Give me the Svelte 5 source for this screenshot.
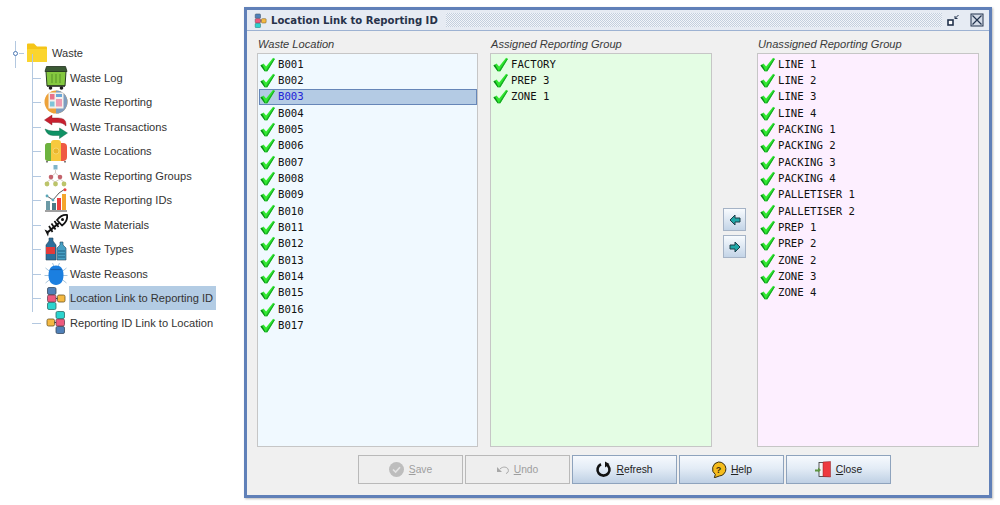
<script>
  const tree = [
    { label: "Waste Log", icon: "bin" },
    { label: "Waste Reporting", icon: "report" },
    { label: "Waste Transactions", icon: "swap" },
    { label: "Waste Locations", icon: "bag" },
    { label: "Waste Reporting Groups", icon: "groups" },
    { label: "Waste Reporting IDs", icon: "chart" },
    { label: "Waste Materials", icon: "fish" },
    { label: "Waste Types", icon: "bottle" },
    { label: "Waste Reasons", icon: "bug" },
    { label: "Location Link to Reporting ID", icon: "link", selected: true },
    { label: "Reporting ID Link to Location", icon: "link2" },
  ];

  const locations = [];
  for (let i = 1; i <= 17; i++) {
    locations.push("B" + String(i).padStart(3, "0"));
  }

  const assigned = ["FACTORY", "PREP 3", "ZONE 1"];

  const unassigned = [
    "LINE 1", "LINE 2", "LINE 3", "LINE 4",
    "PACKING 1", "PACKING 2", "PACKING 3", "PACKING 4",
    "PALLETISER 1", "PALLETISER 2",
    "PREP 1", "PREP 2",
    "ZONE 2", "ZONE 3", "ZONE 4",
  ];
</script>

{#snippet check()}
  <svg class="check" width="16" height="16" viewBox="0 0 16 16">
    <path d="M0.500 9 L3.800 6.800 L6.500 10 L14 0.800 L15.800 2 L7.800 15.200 L5 15.200 Z" fill="#2fe82f" />
    <path d="M0.500 9 L2.200 7.900 L6 15.200 L5 15.200 Z" fill="#0e8a1e" />
    <path d="M6 15.200 L7.800 15.200 L15.800 2 L15 1.500 L7 13.500 Z" fill="#17a825" />
  </svg>
{/snippet}

{#snippet linkIcon()}
  <rect x="3.500" y="1.500" width="8.500" height="7" rx="1.500" fill="#4f80b8" stroke="#3a4a5e" stroke-width="0.800" />
  <rect x="3.500" y="9" width="8.500" height="7" rx="1.500" fill="#ee5a7e" stroke="#6a4050" stroke-width="0.800" />
  <rect x="3.500" y="16.500" width="8.500" height="7" rx="1.500" fill="#2bd4cf" stroke="#2f6d6b" stroke-width="0.800" />
  <rect x="13.500" y="9" width="7.500" height="7" rx="1.500" fill="#f5b942" stroke="#6b5523" stroke-width="0.800" />
  <path d="M12 12.500h1.500" stroke="#444" stroke-width="1" />
{/snippet}

{#snippet icon(name)}
  <svg class="icon" width="24" height="24" viewBox="0 0 24 24">
    {#if name === "bin"}
      <path d="M2.500 0.500h19l1.500 5H1z" fill="#3b5a34" stroke="#1f2f1c" stroke-width="0.800" />
      <path d="M2 5.500h20l-1 14.500H3z" fill="#84c83f" stroke="#2a3f22" stroke-width="1" />
      <path d="M8 8v9M12 8v9M16 8v9" stroke="#5f9c2c" stroke-width="1.200" />
      <path d="M3 20h18" stroke="#222" stroke-width="1.200" />
      <circle cx="6.500" cy="22" r="1.800" fill="#1c1c1c" /><circle cx="17.500" cy="22" r="1.800" fill="#1c1c1c" />
    {:else if name === "report"}
      <circle cx="12" cy="12" r="11.500" fill="#eda23a" />
      <path d="M12 .5a11.500 11.500 0 0 1 0 23z" fill="#7f9dbf" />
      <rect x="4.500" y="2.500" width="15" height="16" fill="#f4f0ec" />
      <rect x="6" y="4" width="4.500" height="5.500" fill="#e8718a" /><rect x="12" y="4" width="6" height="3" fill="#6aa7d8" />
      <rect x="12" y="9" width="6" height="7.500" fill="#ef9bb0" /><rect x="6" y="11.500" width="4.500" height="5" fill="#7fc4d8" />
    {:else if name === "swap"}
      <path d="M8 0 L0.500 5 L8 10 V7.500 H14 Q19 7.500 22 11 V9 Q22 3 14 3 H8 Z" fill="#c8202f" stroke="#7f1520" stroke-width="0.400" />
      <path d="M15.500 13 L23.500 18 L15.500 23.500 V20.500 H9 Q3 20.500 1 14 Q5 16 9 16 H15.500 Z" fill="#0f9265" stroke="#0a5c40" stroke-width="0.400" />
    {:else if name === "bag"}
      <rect x="1" y="4" width="22" height="18" rx="4" fill="#ef5a43" />
      <rect x="1" y="4" width="9" height="18" rx="3" fill="#6cb33f" />
      <path d="M7 22V4q0-3 3-3h4q3 0 3 3v18z" fill="#f7c93e" />
      <path d="M3 22v1.500M21 22v1.500" stroke="#444" stroke-width="1.400" />
      <circle cx="12" cy="12" r="3" fill="#eab52c" stroke="#fbe083" stroke-width="0.700" />
    {:else if name === "groups"}
      <path d="M11.500 6V9M7 13 L11.500 9 L16 13M3 18 L7 15 L11 18M11 18 L16 15 L20 18" stroke="#c9bcb4" stroke-width="0.800" fill="none" />
      <rect x="9.500" y="1" width="4" height="4.500" fill="#7fb5c9" />
      <circle cx="7" cy="13" r="2.300" fill="#c4636c" /><circle cx="16" cy="13" r="2.300" fill="#c4636c" />
      <circle cx="3" cy="20" r="2.400" fill="#bcc46a" /><circle cx="11.500" cy="20" r="2.400" fill="#bcc46a" /><circle cx="20" cy="20" r="2.400" fill="#bcc46a" />
    {:else if name === "chart"}
      <rect x="2" y="13" width="4" height="9" fill="#6c9aa6" />
      <rect x="8" y="15" width="4" height="7" fill="#4d7a86" />
      <rect x="13" y="10" width="4" height="12" fill="#ef3f3f" />
      <rect x="18" y="6" width="4" height="16" fill="#f5a62c" />
      <path d="M3 8 L9 12 L15 5 L21 1" stroke="#333" stroke-width="0.800" fill="none" />
      <circle cx="3" cy="8" r="1.400" fill="#5aa7b8" /><circle cx="9" cy="12" r="1.400" fill="#5aa7b8" /><circle cx="21" cy="1.800" r="1.500" fill="#ef3f3f" />
      <path d="M1 23h22" stroke="#444" />
    {:else if name === "fish"}
      <path d="M13 7 Q18 1 23 2 Q24 8 18 12.500 Z" fill="#fff" stroke="#111" stroke-width="1.800" stroke-linejoin="round" />
      <circle cx="18.500" cy="6.500" r="1.500" fill="#111" />
      <path d="M15 10 L4 19" stroke="#111" stroke-width="2.200" />
      <path d="M10.500 8 L14.500 14M7.500 10.500 L11.500 16.500M5 13 L8.500 19" stroke="#111" stroke-width="1.700" />
      <path d="M0.500 16.500 L5 18.500 L4 23.500 Z" fill="#111" />
    {:else if name === "bottle"}
      <path d="M5 1h4v3l3 4v15H2V8l3-4z" fill="#2c6f9b" stroke="#25435a" stroke-width="0.600" />
      <rect x="2" y="10" width="9" height="7" fill="#e23a3a" />
      <path d="M16 5h3v3l3 3v12h-9V11l3-3z" fill="#47a0c4" stroke="#25435a" stroke-width="0.600" />
      <path d="M14 14h7M14 17h7M14 20h7" stroke="#1f5f82" />
    {:else if name === "bug"}
      <path d="M1.500 6l5 4M22.500 6l-5 4M0.500 13.500h6M23.500 13.500h-6M1.500 21l5-4M22.500 21l-5-4M8.500 1l1.500 3.500M15.500 1L14 4.500" stroke="#a6c4dc" stroke-width="1" />
      <path d="M12 3.500c4.500 0 7.500 3 7.500 9.500s-3 10-7.500 10-7.500-3.500-7.500-10 3-9.500 7.500-9.500z" fill="#1b7fe0" />
      <path d="M6.500 7.500h11" stroke="#1460b0" stroke-width="1.200" />
    {:else if name === "link"}
      {@render linkIcon()}
    {:else if name === "link2"}
      <g transform="matrix(-1 0 0 -1 24 24)">{@render linkIcon()}</g>
    {/if}
  </svg>
{/snippet}

{#snippet list(items, tone, selected)}
  <ul class="list {tone}">
    {#each items as item}
      <li class:sel={item === selected}>
        {@render check()}
        <span>{item}</span>
      </li>
    {/each}
  </ul>
{/snippet}

{#snippet button(name, rest, disabled)}
  <button class="btn" {disabled}>
    {#if name === "S"}
      <svg width="17" height="17" viewBox="0 0 17 17">
        <circle cx="8.500" cy="8.500" r="7.500" fill="#bdbdbd" />
        <path d="M5 8.500l2.600 2.600L12 6.200" fill="none" stroke="#e4e4e4" stroke-width="1.600" />
      </svg>
    {:else if name === "U"}
      <svg width="14" height="10" viewBox="0 0 14 10">
        <path d="M1 2v5h5z" fill="#a8a8a8" />
        <path d="M4 4c3-3 7-2 8 0s0 4-2 4.500" fill="none" stroke="#a8a8a8" stroke-width="1" />
      </svg>
    {:else if name === "R"}
      <svg width="17" height="17" viewBox="0 0 17 17">
        <path d="M6 3.200a6 6 0 1 0 5 0" fill="none" stroke="#111" stroke-width="2.600" />
        <path d="M10 0.500 L10 6.500 L14.500 3 Z" fill="#111" />
      </svg>
    {:else if name === "H"}
      <svg width="17" height="17" viewBox="0 0 17 17">
        <path d="M8.500 1a7 7 0 0 1 .8 14l-5 1.800 1-3.300A7 7 0 0 1 8.500 1z" fill="#f5bc1c" stroke="#3a2f10" stroke-width="1" />
        <text x="8.500" y="11.500" font-size="9" font-weight="700" text-anchor="middle" fill="#3a2f10" font-family="Liberation Sans">?</text>
      </svg>
    {:else if name === "C"}
      <svg width="18" height="17" viewBox="0 0 18 17">
        <rect x="5" y="1.500" width="10" height="14" fill="#f4f4f4" stroke="#333" stroke-width="0.800" />
        <path d="M9 1l7.500-0.500V16L9 15.500z" fill="#ee3a3f" stroke="#8c2226" stroke-width="0.500" />
        <path d="M1 8.500h3V6.500l3 2.500-3 2.500V10.500H1z" fill="#5d9440" />
      </svg>
    {/if}
    <span class="btn-text"><u>{name}</u>{rest}</span>
  </button>
{/snippet}

<div class="page">
  <nav class="tree">
    <div class="root">
      <span class="node"></span>
      <svg class="folder" width="22" height="20" viewBox="0 0 22 20">
        <path d="M1 1.500q0-1 1-1h6l3 3h9q1 0 1 1V18q0 1-1 1H2q-1 0-1-1z" fill="#f5c518" />
        <path d="M1 7q0-1 1-1h18q1 0 1 1v11q0 1-1 1H2q-1 0-1-1z" fill="#fbd52e" />
      </svg>
      <span class="label">Waste</span>
    </div>
    <ul class="children">
      {#each tree as row}
        <li class="row">
          {@render icon(row.icon)}
          <span class="label" class:selected={row.selected}>{row.label}</span>
        </li>
      {/each}
    </ul>
  </nav>

  <section class="window">
    <header class="titlebar">
      <svg width="15" height="15" viewBox="0 0 24 24">{@render linkIcon()}</svg>
      <h1>Location Link to Reporting ID</h1>
      <div class="dots"></div>
      <svg class="win-btn" width="14" height="14" viewBox="0 0 14 14">
        <rect x="2" y="7" width="5" height="5" fill="#fff" stroke="#23334d" stroke-width="1.600" />
        <path d="M9 5.500l3.500-3.500M9 5.500h2.500M9 5.500V3" stroke="#23334d" fill="none" />
      </svg>
      <svg class="win-btn close" width="14" height="14" viewBox="0 0 14 14">
        <rect x="1" y="1" width="12" height="12" fill="#d3dae6" stroke="#23334d" />
        <path d="M2.500 2.500l9 9M11.500 2.500l-9 9" stroke="#23334d" stroke-width="1.200" />
      </svg>
    </header>

    <div class="content">
      <div class="panes">
        <div class="pane">
          <h2>Waste Location</h2>
          {@render list(locations, "blue", "B003")}
        </div>
        <div class="pane wide">
          <h2>Assigned Reporting Group</h2>
          {@render list(assigned, "green")}
        </div>
        <div class="arrows">
          <button class="arrow" aria-label="Assign">
            <svg width="12" height="12" viewBox="0 0 12 12"><path d="M1 6l5-5v3h5v4H6v3z" fill="#1fa7a7" stroke="#1d3d48" /></svg>
          </button>
          <button class="arrow" aria-label="Unassign">
            <svg width="12" height="12" viewBox="0 0 12 12"><path d="M11 6L6 1v3H1v4h5v3z" fill="#1fa7a7" stroke="#1d3d48" /></svg>
          </button>
        </div>
        <div class="pane wide">
          <h2>Unassigned Reporting Group</h2>
          {@render list(unassigned, "pink")}
        </div>
      </div>

      <footer class="buttons">
        {@render button("S", "ave", true)}
        {@render button("U", "ndo", true)}
        {@render button("R", "efresh", false)}
        {@render button("H", "elp", false)}
        {@render button("C", "lose", false)}
      </footer>
    </div>
  </section>
</div>

<style>
  :global(body) {
    background: #fff;
  }

  ul {
    list-style: none;
    margin: 0;
    padding: 0;
  }

  .page {
    display: flex;
    width: 1000px;
    height: 505px;
    padding-top: 7px;
    box-sizing: border-box;
    overflow: hidden;
    font-family: "Liberation Sans", Arial, sans-serif;
  }

  /* tree on the left */
  .tree {
    width: 244px;
    flex: none;
    padding-top: 34px;
    box-sizing: border-box;
    font-size: 11.100px;
    color: #333;
  }

  .root {
    position: relative;
    display: flex;
    align-items: center;
    height: 24.500px;
    padding-left: 26px;
    gap: 3px;
  }

  .root::before {
    content: "";
    position: absolute;
    left: 14.500px;
    top: 0;
    height: 27px;
    border-left: 1px solid #b3c8e0;
  }

  .node {
    position: absolute;
    left: 12.500px;
    top: 10px;
    width: 3px;
    height: 3px;
    border: 1.500px solid #4d78b4;
    border-radius: 50%;
    background: #fff;
  }

  .node::after {
    content: "";
    position: absolute;
    left: 5px;
    top: 1px;
    width: 5px;
    border-top: 1px solid #b3c8e0;
  }

  .children {
    position: relative;
    margin-left: 32px;
  }

  .children::before {
    content: "";
    position: absolute;
    left: 0;
    top: -12px;
    height: 258px;
    border-left: 1px solid #b3c8e0;
  }

  .row {
    position: relative;
    display: flex;
    align-items: center;
    height: 24.500px;
    padding-left: 12px;
    gap: 1px;
  }

  .row::before {
    content: "";
    position: absolute;
    left: 0;
    top: 12px;
    width: 9px;
    border-top: 1px solid #b3c8e0;
  }

  .icon {
    flex: none;
  }

  .label {
    display: flex;
    align-items: center;
    height: 24px;
    padding: 0 1px;
    white-space: nowrap;
  }

  .selected {
    background: #b3cce4;
    width: 145px;
  }

  /* dialog */
  .window {
    width: 748px;
    height: 491px;
    flex: none;
    box-sizing: border-box;
    border: 3px solid #6080b8;
    background: #f0f0f0;
    display: flex;
    flex-direction: column;
    box-shadow: 1px 1px 2px rgba(60, 60, 60, 0.35);
  }

  .titlebar {
    display: flex;
    align-items: center;
    height: 21px;
    flex: none;
    box-sizing: border-box;
    padding: 0 5px 0 6px;
    background: #e6ebf3;
    border-bottom: 1px solid #9db2d2;
  }

  h1 {
    margin: 0 8px 0 3px;
    font: bold 10.100px "DejaVu Sans", sans-serif;
    color: #26324a;
    white-space: nowrap;
  }

  .dots {
    flex: 1;
    height: 14px;
    background-image: repeating-conic-gradient(#c3cfde 0 25%, #f3f5f9 0 50%);
    background-size: 2px 2px;
  }

  .win-btn {
    margin-left: 4px;
    flex: none;
  }

  .close {
    margin-left: 10px;
  }

  .content {
    flex: 1;
    display: flex;
    flex-direction: column;
    padding: 0 10px 11px;
    min-height: 0;
  }

  .panes {
    flex: 1;
    display: flex;
    min-height: 0;
  }

  .pane {
    width: 221px;
    display: flex;
    flex-direction: column;
    margin-right: 12px;
  }

  .pane.wide {
    width: 222px;
    margin-right: 0;
  }

  h2 {
    margin: 0;
    height: 22px;
    padding-left: 1px;
    font: italic 11.100px/26px "Liberation Sans", Arial, sans-serif;
    color: #3a3a3a;
  }

  .list {
    flex: 1;
    box-sizing: border-box;
    border: 1px solid #c6c6c6;
    padding: 2px 0 0 1px;
    font: 10.670px "DejaVu Sans Mono", monospace;
    color: #111;
  }

  .blue { background: #f0f9ff; }
  .green { background: #e4fde4; }
  .pink { background: #fdefff; }

  .list li {
    display: flex;
    align-items: center;
    height: 16.330px;
    gap: 3px;
    padding-left: 1px;
    box-sizing: border-box;
    white-space: pre;
  }

  .list li.sel {
    background: #b4cbe4;
    outline: 1px solid #6686b8;
    outline-offset: -1px;
    color: #2323d8;
  }

  .check {
    flex: none;
    width: 15px;
    height: 15px;
  }

  .arrows {
    width: 45px;
    flex: none;
    display: flex;
    flex-direction: column;
    align-items: center;
    justify-content: center;
    gap: 4px;
    padding-bottom: 14px;
    box-sizing: border-box;
    height: 418px;
  }

  .arrow {
    width: 23px;
    height: 23px;
    padding: 0;
    display: flex;
    align-items: center;
    justify-content: center;
    border: 1px solid #a5b3c6;
    background: linear-gradient(#f8fbfe, #c3d4e7);
  }

  .buttons {
    display: flex;
    justify-content: center;
    gap: 2px;
    padding: 8px 0 0 12px;
    flex: none;
    height: 37px;
    box-sizing: border-box;
  }

  .btn {
    width: 105px;
    height: 29px;
    padding: 0;
    display: flex;
    align-items: center;
    justify-content: center;
    gap: 4px;
    border: 1px solid #8ea3bd;
    background: linear-gradient(#f6f9fd, #e3ecf6 45%, #bfd0e4);
    font: 10.300px "Liberation Sans", Arial, sans-serif;
    color: #222;
  }

  .btn:disabled {
    border-color: #b9b9b9;
    background: #eeeeee;
    color: #9e9e9e;
  }

  .btn-text {
    white-space: nowrap;
  }
</style>
